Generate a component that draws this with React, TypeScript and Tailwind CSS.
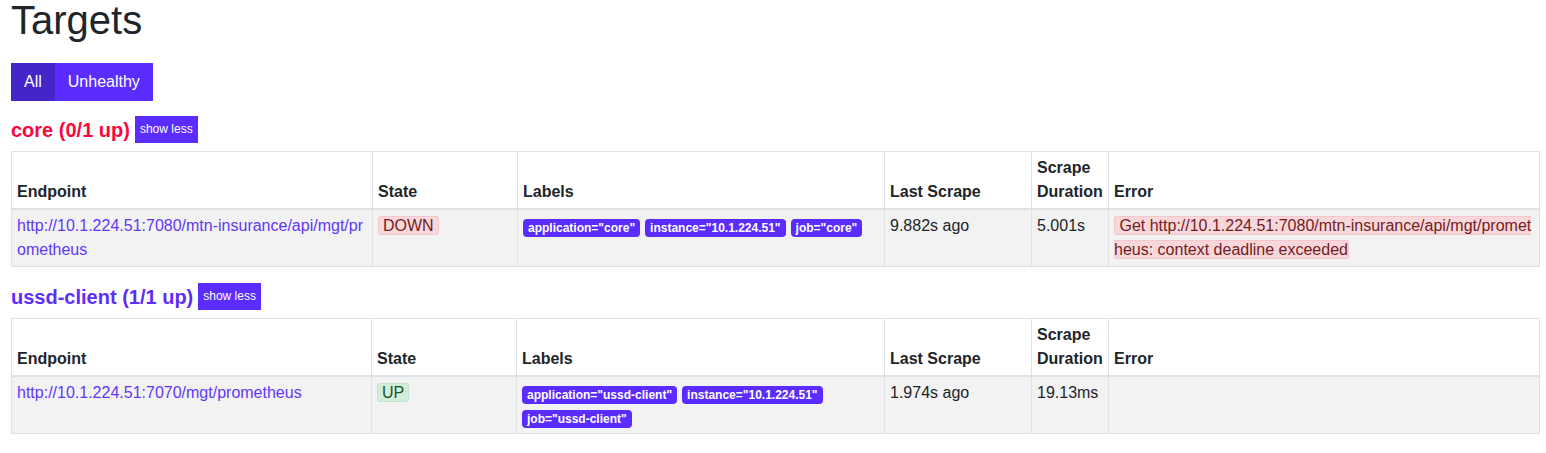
const sans = { fontFamily: '"Liberation Sans", Arial, sans-serif' };

interface Target {
  endpoint: string;
  up: boolean;
  labels: string[];
  lastScrape: string;
  duration: string;
  error?: string;
}

interface Pool {
  name: string;
  summary: string;
  widths: number[];
  targets: Target[];
}

const pools: Pool[] = [
  {
    name: "core",
    summary: "(0/1 up)",
    widths: [361, 145, 367, 147, 77, 431],
    targets: [
      {
        endpoint: "http://10.1.224.51:7080/mtn-insurance/api/mgt/prometheus",
        up: false,
        labels: ['application="core"', 'instance="10.1.224.51"', 'job="core"'],
        lastScrape: "9.882s ago",
        duration: "5.001s",
        error:
          " Get http://10.1.224.51:7080/mtn-insurance/api/mgt/prometheus: context deadline exceeded",
      },
    ],
  },
  {
    name: "ussd-client",
    summary: "(1/1 up)",
    widths: [360, 145, 368, 147, 77, 431],
    targets: [
      {
        endpoint: "http://10.1.224.51:7070/mgt/prometheus",
        up: true,
        labels: [
          'application="ussd-client"',
          'instance="10.1.224.51"',
          'job="ussd-client"',
        ],
        lastScrape: "1.974s ago",
        duration: "19.13ms",
      },
    ],
  },
];

const headers = ["Endpoint", "State", "Labels", "Last Scrape", "Scrape Duration", "Error"];

function PoolTable({ pool }: { pool: Pool }) {
  const healthy = pool.targets.every((t) => t.up);
  return (
    <div className="mb-4">
      <div className="flex items-center mb-2">
        <h2
          className={
            "text-[20px] font-bold leading-[24px] " +
            (healthy ? "text-[#5d2dfb]" : "text-[#f8073e]")
          }
        >
          {pool.name} {pool.summary}
        </h2>
        <button className="ml-[5px] h-[27px] px-[5px] bg-[#5a2cfe] text-white text-[12px] leading-[27px]">
          show less
        </button>
      </div>
      <table className="w-[1528px] table-fixed border-collapse text-[16px] leading-6 text-[#212529]">
        <colgroup>
          {pool.widths.map((w, i) => (
            <col key={i} style={{ width: w }} />
          ))}
        </colgroup>
        <thead>
          <tr>
            {headers.map((h) => (
              <th
                key={h}
                className="border border-[#dee2e6] border-b-2 px-[5px] py-[4px] text-left align-bottom font-bold"
              >
                {h}
              </th>
            ))}
          </tr>
        </thead>
        <tbody>
          {pool.targets.map((t) => (
            <tr key={t.endpoint} className="bg-[#f2f2f2]">
              <td className="border border-[#dee2e6] px-[5px] py-[4px] align-top break-all">
                <a className="text-[#6237f8]">{t.endpoint}</a>
              </td>
              <td className="border border-[#dee2e6] px-[5px] py-[4px] align-top">
                {t.up ? (
                  <span className="rounded-[3px] border border-[#c3e6cb] bg-[#d4edda] px-[4px] text-[#155724]">
                    UP
                  </span>
                ) : (
                  <span className="rounded-[3px] border border-[#f5c6cb] bg-[#f8d7da] px-[4px] text-[#721c24]">
                    DOWN
                  </span>
                )}
              </td>
              <td className="border border-[#dee2e6] px-[5px] py-[4px] align-top">
                <div className="flex flex-wrap gap-x-[5px] gap-y-[6px] pt-[5px] pb-[1px]">
                  {t.labels.map((l) => (
                    <span
                      key={l}
                      className="rounded-[4px] bg-[#5a2cfe] px-[5px] text-[12px] font-bold leading-[18px] text-white"
                    >
                      {l}
                    </span>
                  ))}
                </div>
              </td>
              <td className="border border-[#dee2e6] px-[5px] py-[4px] align-top">
                {t.lastScrape}
              </td>
              <td className="border border-[#dee2e6] px-[5px] py-[4px] align-top">
                {t.duration}
              </td>
              <td className="border border-[#dee2e6] px-[5px] py-[4px] align-top break-all">
                {t.error && (
                  <span className="rounded-[3px] border border-[#f5c6cb] bg-[#f8d7da] text-[#721c24] whitespace-pre-wrap">
                    {t.error}
                  </span>
                )}
              </td>
            </tr>
          ))}
        </tbody>
      </table>
    </div>
  );
}

export default function App() {
  return (
    <div className="bg-white px-[11px] min-h-[453px]" style={sans}>
      <h1 className="text-[40px] leading-[48px] font-normal text-[#212529] -mt-[4px] mb-[19px]">
        Targets
      </h1>
      <div className="flex mb-[15px]">
        <button className="h-[38px] px-[13px] bg-[#4325c9] text-white text-[16px]">All</button>
        <button className="h-[38px] px-[13px] bg-[#5a2cfe] text-white text-[16px]">
          Unhealthy
        </button>
      </div>
      {pools.map((p) => (
        <PoolTable key={p.name} pool={p} />
      ))}
    </div>
  );
}
